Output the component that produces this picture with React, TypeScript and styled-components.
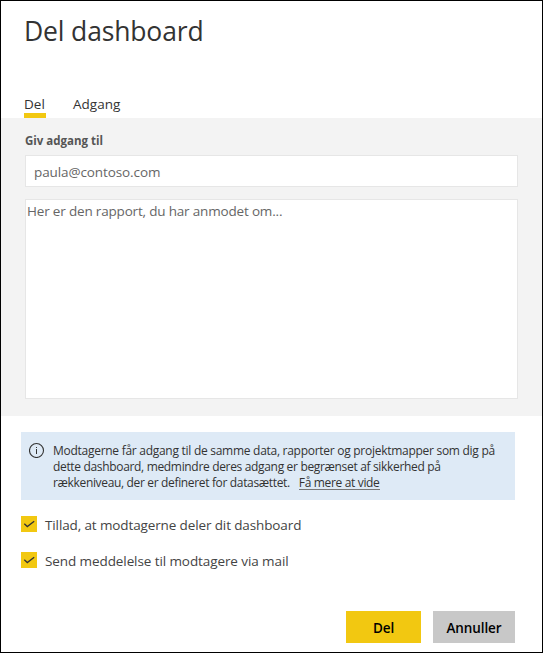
import React from 'react';
import styled, { createGlobalStyle } from 'styled-components';

const GlobalStyle = createGlobalStyle`
  *, *::before, *::after { box-sizing: border-box; }
  body { margin: 0; background: #fff; font-family: "Open Sans", "Noto Sans", sans-serif; }
`;

const Dialog = styled.main`
  width: 543px;
  height: 653px;
  border: 1px solid #000;
  background: #fff;
  color: #333;
  display: flex;
  flex-direction: column;
`;

const Title = styled.h1`
  margin: 0;
  padding: 10px 0 0 23px;
  height: 93px;
  font-size: 26.5px;
  line-height: 40px;
  font-weight: 400;
  letter-spacing: -0.15px;
`;

const Tabs = styled.nav`
  display: flex;
  gap: 27px;
  height: 24px;
  padding-left: 23px;
`;

const Tab = styled.button<{ $active?: boolean }>`
  border: 0;
  border-bottom: 5px solid ${p => (p.$active ? '#f2c811' : 'transparent')};
  padding: 0;
  min-width: 22px;
  height: 24px;
  background: none;
  font: 400 13.5px/20px "Open Sans", "Noto Sans", sans-serif;
  text-align: left;
  color: #333;
`;

const SharePanel = styled.section`
  height: 298px;
  padding: 14px 24px 0;
  background: #f3f3f3;
`;

const Label = styled.label`
  display: block;
  height: 23px;
  font-size: 11.5px;
  line-height: 18px;
  font-weight: 700;
  color: #555;
`;

const fieldBase = `
  display: block;
  width: 493px;
  border: 1px solid #e6e6e6;
  border-radius: 0;
  outline: 0;
  resize: none;
  background: #fff;
  color: #666;
  font-family: "Open Sans", "Noto Sans", sans-serif;
  font-size: 13.5px;
`;

const EmailInput = styled.input`
  ${fieldBase}
  height: 32px;
  padding: 1px 8px 0;
  letter-spacing: -0.1px;
`;

const Message = styled.textarea`
  ${fieldBase}
  height: 200px;
  margin-top: 12px;
  padding: 2px 1px;
  line-height: 19px;
  letter-spacing: -0.18px;
`;

const InfoBox = styled.aside`
  display: flex;
  gap: 8px;
  width: 494px;
  height: 68px;
  margin: 16px 0 0 20px;
  padding: 10px 0 0 8px;
  background: #deeaf6;
`;

const InfoIcon = styled.svg`
  flex: none;
  width: 16px;
  height: 16px;
`;

const InfoText = styled.div`
  font-size: 12px;
  line-height: 17px;
  white-space: nowrap;
`;

const Line = styled.div<{ $spacing: number }>`
  height: 16px;
  letter-spacing: ${p => p.$spacing}px;
`;

const MoreLink = styled.a`
  display: inline-block;
  height: 16px;
  margin-left: 9px;
  border-bottom: 1px solid #777;
  line-height: 17px;
  color: #333;
`;

const Options = styled.div`
  display: flex;
  flex-direction: column;
  gap: 20px;
  padding: 16px 0 0 20px;
`;

const Option = styled.label<{ $spacing: number }>`
  display: flex;
  gap: 8px;
  height: 16px;
  font-size: 13.5px;
  line-height: 18px;
  white-space: nowrap;
  color: #444;
  letter-spacing: ${p => p.$spacing}px;
`;

const CheckBox = styled.span`
  display: block;
  width: 16px;
  height: 16px;
  background: #f2c811;
  svg { display: block; }
`;

const Footer = styled.footer`
  display: flex;
  gap: 12px;
  margin: auto 27px 9px auto;
`;

const Action = styled.button<{ $primary?: boolean }>`
  width: ${p => (p.$primary ? 75 : 82)}px;
  height: 32px;
  padding: 2px 0 0;
  border: 0;
  background: ${p => (p.$primary ? '#f2c811' : '#c8c8c8')};
  color: #000;
  font: 600 13.5px/20px "Open Sans", "Noto Sans", sans-serif;
  letter-spacing: -0.1px;
`;

function Check() {
  return (
    <CheckBox>
      <svg width="16" height="16" viewBox="0 0 16 16" fill="none" stroke="#333" strokeWidth="1.3">
        <path d="M3.3 7.8 6.3 10.6 13.2 5.2" />
      </svg>
    </CheckBox>
  );
}

export default function App() {
  return (
    <>
      <GlobalStyle />
      <Dialog>
        <Title>Del dashboard</Title>
        <Tabs>
          <Tab $active>Del</Tab>
          <Tab>Adgang</Tab>
        </Tabs>
        <SharePanel>
          <Label htmlFor="email">Giv adgang til</Label>
          <EmailInput id="email" defaultValue="paula@contoso.com" spellCheck={false} />
          <Message defaultValue="Her er den rapport, du har anmodet om..." spellCheck={false} />
        </SharePanel>
        <InfoBox>
          <InfoIcon viewBox="0 0 16 16" fill="none" stroke="#333">
            <circle cx="7.5" cy="8.5" r="7" strokeWidth="1.1" />
            <path d="M7.5 7v5M7.5 5v1" />
          </InfoIcon>
          <InfoText>
            <Line $spacing={-0.275}>Modtagerne får adgang til de samme data, rapporter og projektmapper som dig på</Line>
            <Line $spacing={-0.33}>dette dashboard, medmindre deres adgang er begrænset af sikkerhed på</Line>
            <Line $spacing={-0.34}>rækkeniveau, der er defineret for datasættet.<MoreLink>Få mere at vide</MoreLink></Line>
          </InfoText>
        </InfoBox>
        <Options>
          <Option $spacing={-0.12}><Check />Tillad, at modtagerne deler dit dashboard</Option>
          <Option $spacing={-0.09}><Check />Send meddelelse til modtagere via mail</Option>
        </Options>
        <Footer>
          <Action $primary>Del</Action>
          <Action>Annuller</Action>
        </Footer>
      </Dialog>
    </>
  );
}
